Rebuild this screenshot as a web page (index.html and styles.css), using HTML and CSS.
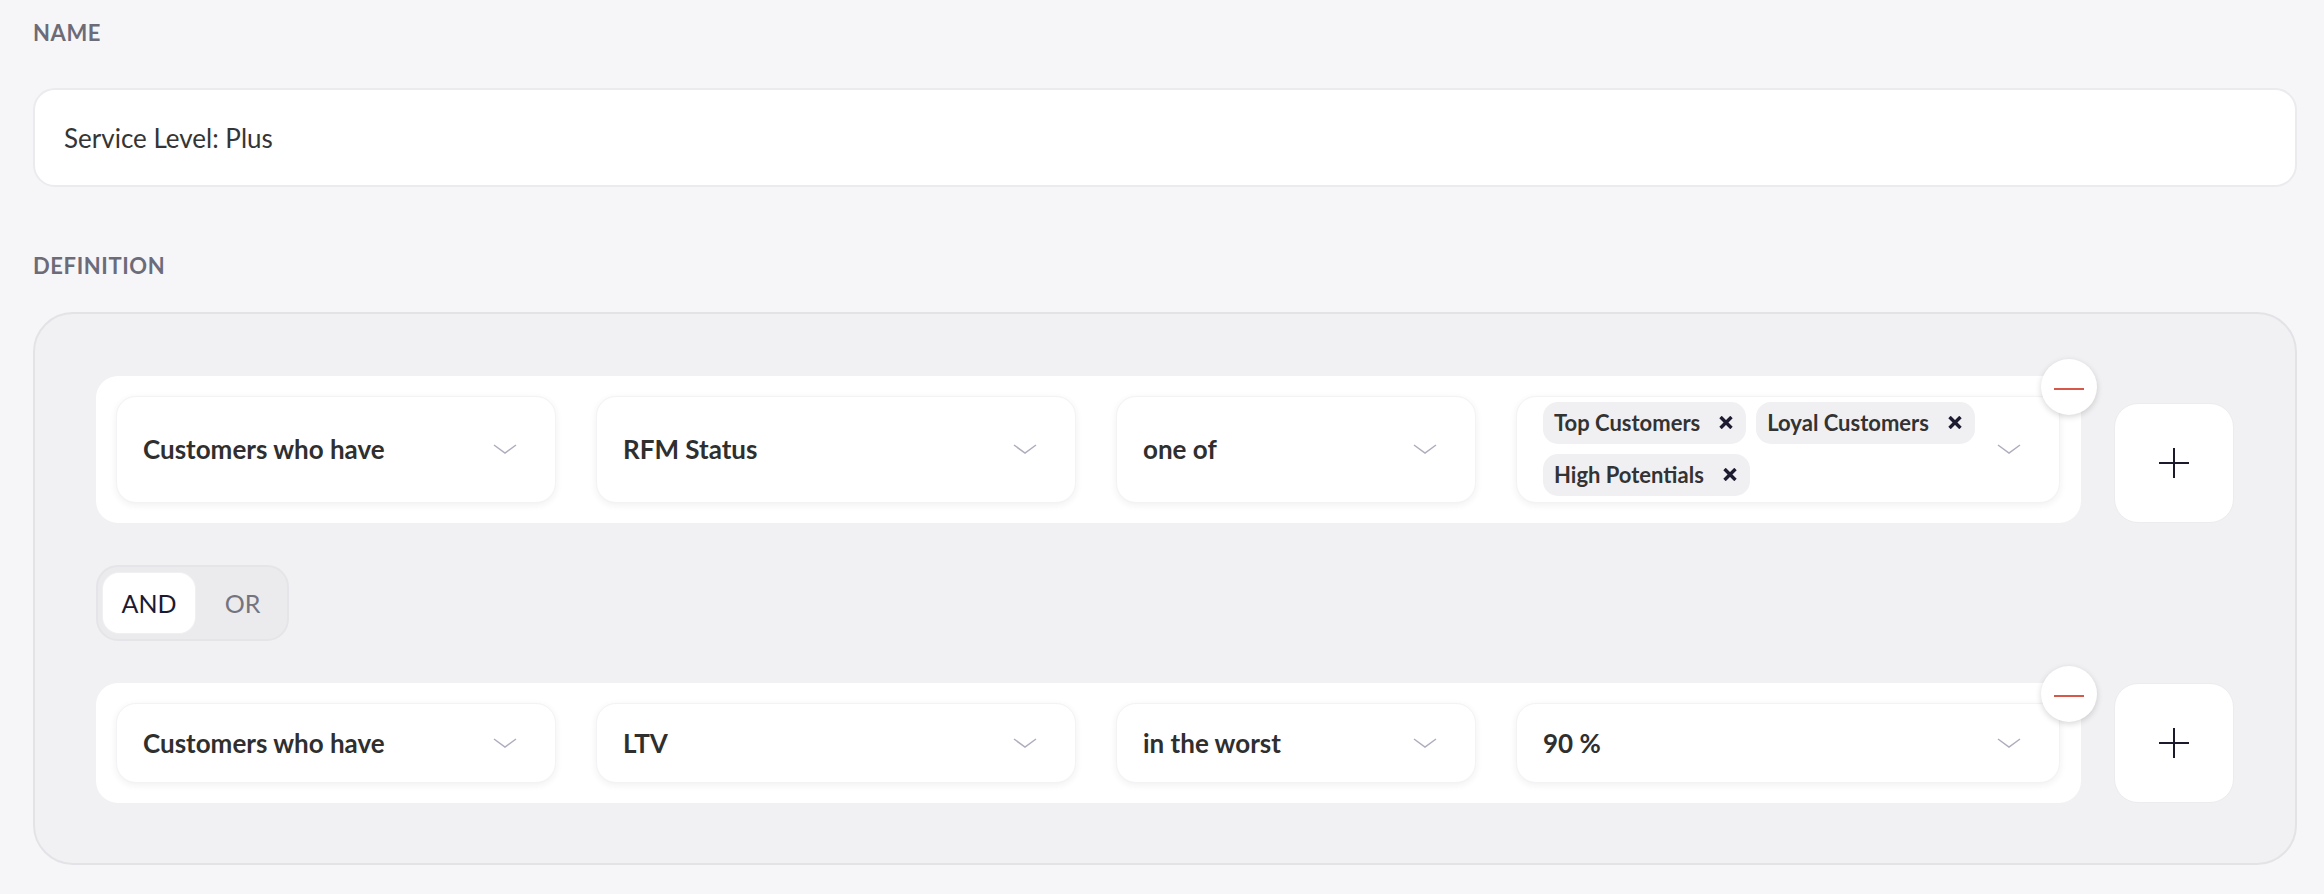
FILE: index.html
```html
<!DOCTYPE html>
<html>
<head>
  <meta charset="UTF-8">
  <meta name="viewport" content="width=device-width, initial-scale=1">
  <title>Segment</title>
  <link rel="stylesheet" href="styles.css">
</head>
<body>
  <div class="page">
    <div class="label">Name</div>
    <div class="name-input">Service Level: Plus</div>

    <div class="label label-def">Definition</div>
    <div class="definition">

      <!-- first condition -->
      <div class="rule">
        <div class="rule-card">
          <div class="select">
            <span class="select-text">Customers who have</span>
            <svg class="chevron" width="24" height="10" viewBox="0 0 24 10"><polyline points="1,1 12,9 23,1"/></svg>
          </div>
          <div class="select">
            <span class="select-text">RFM Status</span>
            <svg class="chevron" width="24" height="10" viewBox="0 0 24 10"><polyline points="1,1 12,9 23,1"/></svg>
          </div>
          <div class="select">
            <span class="select-text">one of</span>
            <svg class="chevron" width="24" height="10" viewBox="0 0 24 10"><polyline points="1,1 12,9 23,1"/></svg>
          </div>
          <div class="select select-tags">
            <div class="tags">
              <span class="tag">Top Customers <svg class="tag-x" width="14" height="13" viewBox="0 0 14 13"><line x1="1.5" y1="1" x2="12.5" y2="12"/><line x1="12.5" y1="1" x2="1.5" y2="12"/></svg></span>
              <span class="tag">Loyal Customers <svg class="tag-x" width="14" height="13" viewBox="0 0 14 13"><line x1="1.5" y1="1" x2="12.5" y2="12"/><line x1="12.5" y1="1" x2="1.5" y2="12"/></svg></span>
              <span class="tag">High Potentials <svg class="tag-x" width="14" height="13" viewBox="0 0 14 13"><line x1="1.5" y1="1" x2="12.5" y2="12"/><line x1="12.5" y1="1" x2="1.5" y2="12"/></svg></span>
            </div>
            <svg class="chevron" width="24" height="10" viewBox="0 0 24 10"><polyline points="1,1 12,9 23,1"/></svg>
          </div>
          <button class="remove"><span class="minus"></span></button>
        </div>
        <button class="add">
          <svg width="30" height="30" viewBox="0 0 30 30"><line x1="0" y1="15" x2="30" y2="15"/><line x1="15" y1="0" x2="15" y2="30"/></svg>
        </button>
      </div>

      <div class="toggle">
        <span class="toggle-item active">AND</span>
        <span class="toggle-item">OR</span>
      </div>

      <!-- second condition -->
      <div class="rule">
        <div class="rule-card">
          <div class="select">
            <span class="select-text">Customers who have</span>
            <svg class="chevron" width="24" height="10" viewBox="0 0 24 10"><polyline points="1,1 12,9 23,1"/></svg>
          </div>
          <div class="select">
            <span class="select-text">LTV</span>
            <svg class="chevron" width="24" height="10" viewBox="0 0 24 10"><polyline points="1,1 12,9 23,1"/></svg>
          </div>
          <div class="select">
            <span class="select-text">in the worst</span>
            <svg class="chevron" width="24" height="10" viewBox="0 0 24 10"><polyline points="1,1 12,9 23,1"/></svg>
          </div>
          <div class="select">
            <span class="select-text">90 %</span>
            <svg class="chevron" width="24" height="10" viewBox="0 0 24 10"><polyline points="1,1 12,9 23,1"/></svg>
          </div>
          <button class="remove"><span class="minus"></span></button>
        </div>
        <button class="add">
          <svg width="30" height="30" viewBox="0 0 30 30"><line x1="0" y1="15" x2="30" y2="15"/><line x1="15" y1="0" x2="15" y2="30"/></svg>
        </button>
      </div>

    </div>
  </div>
</body>
</html>
```

FILE: styles.css
```css
body {
  margin: 0;
  padding: 0;
  background-color: #f6f6f8;
  font-family: Lato, "Noto Sans", sans-serif;
  color: #333;
}

.page {
  padding: 20px 27px 0 33px;
}

.label {
  font-size: 22px;
  line-height: 1.2;
  font-weight: bold;
  text-transform: uppercase;
  letter-spacing: 0.6px;
  color: #6c6b78;
}

.name-input {
  margin-top: 42px;
  height: 95px;
  display: flex;
  align-items: center;
  padding-left: 29px;
  background-color: #fff;
  border: 2px solid #ebebef;
  border-radius: 22px;
  font-size: 26px;
  color: #353535;
}

.label-def {
  margin-top: 66px;
}

.definition {
  margin-top: 32px;
  display: flex;
  flex-direction: column;
  gap: 42px;
  padding: 62px 61px 60px 61px;
  background-color: #f1f1f3;
  border: 2px solid #e3e3e7;
  border-radius: 40px;
}

.rule {
  display: flex;
  align-items: flex-end;
  gap: 33px;
}

.rule-card {
  position: relative;
  flex: 1;
  display: grid;
  grid-template-columns: 440fr 480fr 360fr 544fr;
  gap: 40px;
  padding: 20px 21px 20px 20px;
  background-color: #fff;
  border-radius: 22px;
}

.select {
  min-height: 80px;
  box-sizing: border-box;
  display: flex;
  align-items: center;
  padding: 0 38px 0 26px;
  background-color: #fff;
  border: 1px solid #f3f3f5;
  border-radius: 20px;
  box-shadow: 0 2px 7px rgba(40, 40, 70, 0.07);
}

.select-text {
  flex: 1;
  font-size: 26px;
  font-weight: bold;
  color: #2f2f2f;
}

.chevron {
  flex-shrink: 0;
  fill: none;
  stroke: #aeadbd;
  stroke-width: 1.5;
}

.select-tags {
  padding-top: 5px;
  padding-bottom: 6px;
}

.tags {
  flex: 1;
  display: flex;
  flex-wrap: wrap;
  gap: 10px;
}

.tag {
  display: inline-flex;
  align-items: center;
  gap: 19px;
  height: 42px;
  padding: 0 13px 0 11px;
  background-color: #f0f0f3;
  border-radius: 15px;
  font-size: 22px;
  font-weight: bold;
  color: #333;
}

.tag-x {
  stroke: #1e1c30;
  stroke-width: 3.4;
}

.remove {
  position: absolute;
  top: -17px;
  right: -16px;
  width: 56px;
  height: 56px;
  padding: 0;
  display: flex;
  align-items: center;
  justify-content: center;
  background-color: #fff;
  border: none;
  border-radius: 50%;
  box-shadow: 0 2px 6px rgba(0, 0, 0, 0.16);
  cursor: pointer;
}

.minus {
  width: 30px;
  height: 2px;
  margin-top: 4px;
  background-color: #d6584a;
}

.add {
  width: 120px;
  height: 120px;
  flex-shrink: 0;
  padding: 0;
  display: flex;
  align-items: center;
  justify-content: center;
  background-color: #fff;
  border: 1px solid #ececef;
  border-radius: 24px;
  cursor: pointer;
}

.add svg {
  stroke: #1b1a2c;
  stroke-width: 2;
}

.toggle {
  align-self: flex-start;
  display: flex;
  width: 193px;
  height: 76px;
  box-sizing: border-box;
  padding: 6px 5px;
  background-color: #ebebee;
  border: 2px solid #e5e5e9;
  border-radius: 22px;
}

.toggle-item {
  flex: 1;
  display: flex;
  align-items: center;
  justify-content: center;
  padding-left: 8px;
  font-size: 25px;
  color: #75747e;
  border-radius: 16px;
}

.toggle-item.active {
  flex: 0 0 92px;
  padding-left: 0;
  background-color: #fff;
  color: #1c1a33;
  box-shadow: 0 0 0 1px #f0f0f2;
}
```
